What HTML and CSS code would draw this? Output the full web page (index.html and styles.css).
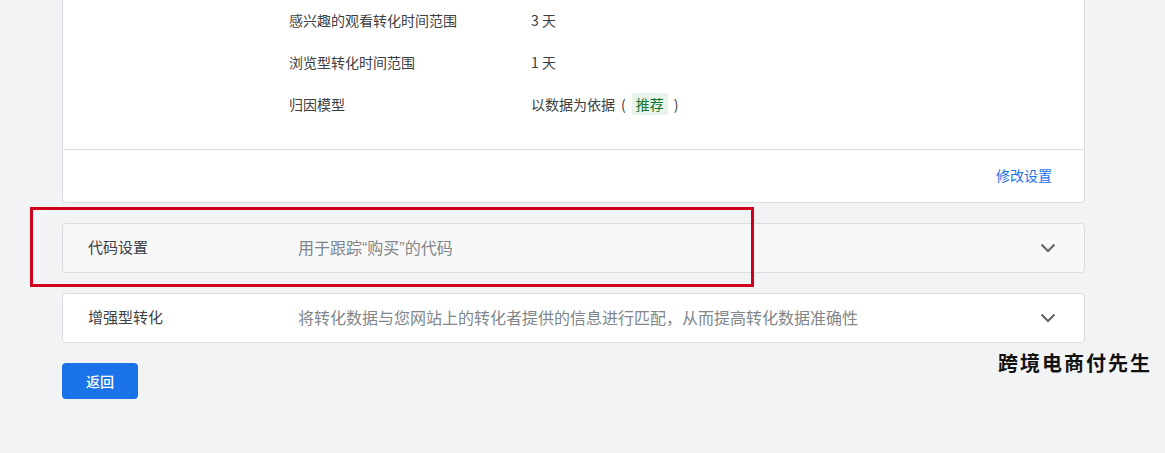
FILE: index.html
```html
<!DOCTYPE html>
<html lang="zh-CN">
<head>
<meta charset="utf-8">
<link rel="stylesheet" href="styles.css">
</head>
<body>
<div class="page">
  <div class="card summary">
    <div class="rows">
      <div class="row"><span class="label">感兴趣的观看转化时间范围</span><span class="value">3 天</span></div>
      <div class="row"><span class="label">浏览型转化时间范围</span><span class="value">1 天</span></div>
      <div class="row"><span class="label">归因模型</span><span class="value">以数据为依据<span class="paren">(</span><span class="chip">推荐</span><span class="paren">)</span></span></div>
    </div>
    <div class="footer"><a class="link">修改设置</a></div>
  </div>

  <div class="panel gray">
    <span class="ptitle">代码设置</span>
    <span class="pdesc">用于跟踪“购买”的代码</span>
    <svg class="chev" width="16" height="10" viewBox="0 0 16 10"><path d="M1.5 1.5 L8 8 L14.5 1.5" fill="none" stroke="#5f6368" stroke-width="2"/></svg>
  </div>

  <div class="panel">
    <span class="ptitle">增强型转化</span>
    <span class="pdesc">将转化数据与您网站上的转化者提供的信息进行匹配，从而提高转化数据准确性</span>
    <svg class="chev" width="16" height="10" viewBox="0 0 16 10"><path d="M1.5 1.5 L8 8 L14.5 1.5" fill="none" stroke="#5f6368" stroke-width="2"/></svg>
  </div>

  <div class="actions"><button class="btn">返回</button></div>
</div>
<div class="highlight"></div>
<div class="watermark">跨境电商付先生</div>
</body>
</html>
```
FILE: styles.css
```css
html, body {
  margin: 0;
  padding: 0;
}
body {
  background: #f1f3f4;
  font-family: "Noto Sans CJK SC", "Noto Sans", sans-serif;
  color: #3c4043;
  width: 1165px;
  height: 453px;
  overflow: hidden;
  position: relative;
}
.page {
  padding-left: 62px;
  width: 1023px;
  display: flex;
  flex-direction: column;
  gap: 20px;
}
.card {
  background: #fff;
  border: 1px solid #dadce0;
  border-radius: 0 0 4px 4px;
  margin-top: -2px;
}
.rows {
  padding: 0 0 24px 226px;
}
.row {
  height: 42px;
  display: flex;
  align-items: center;
  font-size: 14px;
}
.label {
  width: 242px;
  color: #3c4043;
}
.value {
  display: flex;
  align-items: center;
}
.paren {
  margin: 0 6px;
}
.chip {
  background: #e6f4ea;
  color: #137333;
  padding: 1px 4px;
  border-radius: 3px;
}
.footer {
  border-top: 1px solid #dadce0;
  height: 52px;
  display: flex;
  align-items: center;
  justify-content: flex-end;
  padding-right: 32px;
}
.link {
  color: #1a73e8;
  font-size: 14px;
  margin-top: -2px;
}
.panel {
  height: 48px;
  box-sizing: content-box;
  background: #fff;
  border: 1px solid #dadce0;
  border-radius: 4px;
  display: flex;
  align-items: center;
  padding-left: 25px;
  padding-right: 28px;
}
.panel.gray {
  background: #f8f8f8;
}
.ptitle {
  width: 210px;
  font-size: 15px;
  color: #3c4043;
  margin-top: -3px;
}
.pdesc {
  flex: 1;
  font-family: "Liberation Sans", "Noto Sans CJK SC", sans-serif;
  font-size: 16px;
  color: #80868b;
  margin-top: -3px;
}
.chev {
  display: block;
}
.actions {
  display: flex;
}
.btn {
  width: 76px;
  height: 36px;
  background: #1a73e8;
  color: #fff;
  border: none;
  border-radius: 4px;
  font-family: inherit;
  font-size: 14px;
  font-weight: 500;
  padding: 0;
}
.highlight {
  position: absolute;
  left: 30px;
  top: 207px;
  width: 718px;
  height: 74px;
  border: 3px solid #d0021b;
}
.watermark {
  position: absolute;
  left: 998px;
  top: 349px;
  font-size: 20px;
  font-weight: 700;
  letter-spacing: 2px;
  color: #111;
  line-height: 28px;
}
```
